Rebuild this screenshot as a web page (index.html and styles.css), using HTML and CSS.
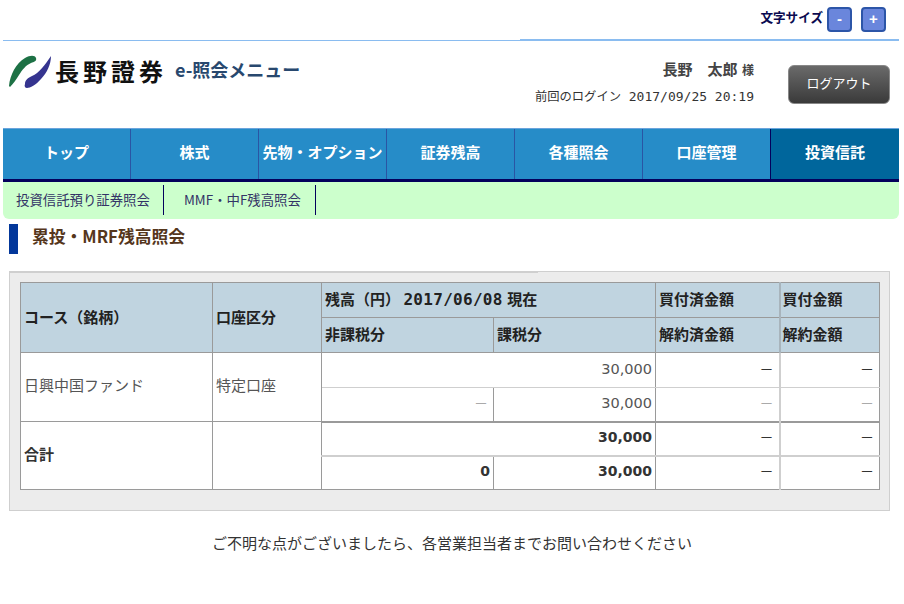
FILE: index.html
```html
<!DOCTYPE html>
<html lang="ja">
<head>
<meta charset="utf-8">
<title>e-照会メニュー</title>
<link rel="stylesheet" href="styles.css">
</head>
<body>
<div class="page">
  <div class="sizebar">
    <span class="size-label">文字サイズ</span>
    <span class="size-btn minus">-</span>
    <span class="size-btn">+</span>
  </div>
  <header class="header">
    <div class="brand">
      <svg class="logo" width="42" height="33" viewBox="0 0 42 33" aria-hidden="true">
        <path d="M0 31C1 20 7 8 16 3C21 0 26 0 27 3C28 6 25 7 22 8C17 10 13 15 10 20C7 25 4 29 1 32Z" fill="#1d7145"/>
        <path d="M16 29C16 25 19 23 23 21C30 18 36 10 42 1C42 9 38 18 32 24C27 30 21 33 18 33C16 33 15 31 16 29Z" fill="#35348f"/>
      </svg>
      <span class="company">長野證券</span>
      <span class="service">e-照会メニュー</span>
    </div>
    <div class="user">
      <div class="user-name">長野　太郎 <small>様</small></div>
      <div class="last-login">前回のログイン <span class="mono">2017/09/25 20:19</span></div>
    </div>
    <div class="logout">ログアウト</div>
  </header>
  <nav class="nav">
    <a class="tab">トップ</a>
    <a class="tab">株式</a>
    <a class="tab tight">先物・オプション</a>
    <a class="tab">証券残高</a>
    <a class="tab">各種照会</a>
    <a class="tab">口座管理</a>
    <a class="tab active">投資信託</a>
  </nav>
  <div class="subnav">
    <a class="sub first">投資信託預り証券照会</a>
    <a class="sub second">MMF・中F残高照会</a>
  </div>
  <h1 class="title">累投・MRF残高照会</h1>
  <section class="panel">
    <table class="grid">
      <colgroup>
        <col class="c1"><col class="c2"><col class="c3"><col class="c4"><col class="c5"><col class="c6">
      </colgroup>
      <thead>
        <tr>
          <th rowspan="2">コース（銘柄）</th>
          <th rowspan="2">口座区分</th>
          <th colspan="2">残高（円） <span class="date">2017/06/08</span> 現在</th>
          <th class="soft">買付済金額</th>
          <th class="soft wide">買付金額</th>
        </tr>
        <tr>
          <th>非課税分</th>
          <th>課税分</th>
          <th class="soft">解約済金額</th>
          <th class="soft wide">解約金額</th>
        </tr>
      </thead>
      <tbody>
        <tr>
          <td rowspan="2" class="name">日興中国ファンド</td>
          <td rowspan="2" class="name">特定口座</td>
          <td colspan="2" class="num line">30,000</td>
          <td class="num line dash">－</td>
          <td class="num line dash wide">－</td>
        </tr>
        <tr class="short">
          <td class="num pale">－</td>
          <td class="num">30,000</td>
          <td class="num pale">－</td>
          <td class="num pale wide">－</td>
        </tr>
        <tr class="total">
          <td rowspan="2" class="label">合計</td>
          <td rowspan="2"></td>
          <td colspan="2" class="num line">30,000</td>
          <td class="num line dash">－</td>
          <td class="num line dash wide">－</td>
        </tr>
        <tr class="total">
          <td class="num">0</td>
          <td class="num">30,000</td>
          <td class="num dash">－</td>
          <td class="num dash wide">－</td>
        </tr>
      </tbody>
    </table>
  </section>
  <p class="note">ご不明な点がございましたら、各営業担当者までお問い合わせください</p>
</div>
</body>
</html>
```
FILE: styles.css
```css
* { box-sizing: border-box; }
html, body { margin: 0; padding: 0; background: #fff; }
body {
  font-family: "Noto Sans CJK JP", "Noto Sans", sans-serif;
  font-size: 15px;
  color: #333;
  overflow: hidden;
}
.page { width: 904px; height: 604px; padding: 0 5px 0 3px; }

.sizebar {
  position: relative;
  height: 41px;
  padding: 7px 13px 0 0;
  display: flex;
  justify-content: flex-end;
  align-items: flex-start;
  gap: 9px;
  border-bottom: 1px solid #8abcf0;
}
.sizebar::after {
  content: "";
  position: absolute;
  left: 517px;
  right: 0;
  bottom: 0;
  height: 1px;
  background: #8abcf0;
}
.size-label { font-size: 12.6px; font-weight: 700; line-height: 20px; color: #0a0a50; margin-right: -5px; }
.size-btn {
  width: 25px;
  height: 25px;
  background: #6a86dc;
  border: 2px solid #2c55a8;
  border-radius: 4px;
  color: #fff;
  font: 700 15px/19px "Liberation Sans", sans-serif;
  text-align: center;
}

.header { height: 87px; display: flex; align-items: flex-start; }
.brand { display: flex; align-items: center; padding: 13px 0 0 6px; width: 520px; }
.logo { flex: none; margin-right: 4px; }
.company { font-size: 24px; font-weight: 700; line-height: 34px; letter-spacing: 4px; color: #111; width: 120px; white-space: nowrap; }
.service { font-size: 18px; font-weight: 700; line-height: 24px; color: #28486e; margin: 0 0 4px 0; white-space: nowrap; }
.user { width: 231px; text-align: right; padding-top: 18px; }
.user-name { font-size: 15px; font-weight: 700; line-height: 20px; color: #444; }
.user-name small { font-size: 12px; margin-left: 1px; }
.last-login { font-size: 12.3px; line-height: 18px; color: #333; margin-top: 7px; white-space: nowrap; }
.mono { font-family: "DejaVu Sans Mono", monospace; font-size: 13px; margin-left: 5px; }
.logout {
  width: 102px;
  height: 39px;
  margin: 24px 0 0 34px;
  border: 1px solid #888;
  border-radius: 6px;
  background: linear-gradient(#6a6a6a, #3a3a3a);
  color: #fff;
  font-size: 13px;
  line-height: 34px;
  text-align: center;
}

.nav {
  display: flex;
  height: 54px;
  background: #268cc8;
  border-top: 1px solid #6aa4dc;
  border-bottom: 3px solid #04005c;
}
.tab {
  flex: 0 0 128px;
  height: 50px;
  border-left: 1px solid #2a55a4;
  color: #fff;
  font-size: 15px;
  font-weight: 700;
  line-height: 46px;
  text-align: center;
  white-space: nowrap;
}
.tab:first-child { flex-basis: 127px; border-left: 0; }
.tab.active { flex: 1 1 auto; background: #00669c; border-left-color: #04005c; }

.subnav {
  display: flex;
  height: 37px;
  padding-top: 3px;
  background: #ccffcc;
  border-radius: 0 0 6px 6px;
}
.sub {
  height: 30px;
  border-right: 1px solid #04005c;
  color: #333366;
  font-size: 13.4px;
  line-height: 28px;
  white-space: nowrap;
}
.sub.first { width: 161px; padding-left: 13px; }
.sub.second { width: 152px; padding-left: 20px; }

.title {
  margin: 5px 0 0 6px;
  height: 30px;
  padding-left: 14px;
  border-left: 9px solid #03379a;
  color: #55361c;
  font-size: 16.8px;
  font-weight: 700;
  line-height: 25px;
}

.panel {
  position: relative;
  width: 881px;
  height: 240px;
  margin: 17px 0 0 6px;
  padding: 10px 9px 0 10px;
  background: #ececec;
  border: 1px solid #cfcfcf;
}
.panel::before {
  content: "";
  position: absolute;
  left: 0;
  top: 0;
  width: 528px;
  height: 1px;
  background: #cfcfcf;
}
.grid {
  width: 859px;
  table-layout: fixed;
  border-collapse: collapse;
  background: #fff;
}
.c1 { width: 192px; }
.c2 { width: 109px; }
.c3 { width: 172px; }
.c4 { width: 162px; }
.c5 { width: 124px; }
.c6 { width: 100px; }
.grid th, .grid td {
  height: 35px;
  padding: 0 3px 2px;
  border: 1px solid #9a9a9a;
  font-size: 15px;
  line-height: 20px;
  white-space: nowrap;
}
.grid th { background: #c0d4e0; color: #222; font-weight: 700; text-align: left; }
.grid th.soft { border-left-color: #a8b4bc; }
.grid th.wide { border-left-width: 2px; padding-left: 2px; }
.date { font-family: "DejaVu Sans Mono", monospace; font-size: 16px; letter-spacing: 0.3px; margin: 0 1px 0 0; }
.grid .short td { height: 34px; }
.grid td.name { color: #555; padding-bottom: 4px; }
.grid td.label { color: #333; font-weight: 700; padding-bottom: 4px; }
.grid td.num { text-align: right; color: #555; font-family: "DejaVu Sans", "Noto Sans CJK JP", sans-serif; font-size: 14.5px; padding-bottom: 3px; }
.grid td.line { border-bottom-color: #cfcfcf; }
.grid td.dash { padding-right: 5px; color: #333; font-size: 14px; }
.grid td.pale { padding-right: 5px; color: #aaa; font-size: 14px; }
.grid td.num:nth-last-child(-n+2) { border-left-color: #cfcfcf; border-right-color: #9a9a9a; }
.grid td.wide { border-left-width: 2px; padding-right: 5px; }
.grid .total td { height: 34px; font-weight: 700; border-top-color: #9a9a9a; }
.grid .total td.num { color: #333; font-size: 14px; }
.grid .total td.line { border-top-width: 2px; border-bottom-width: 2px; }
.grid .total td.dash { font-weight: 400; font-size: 14px; }

.note {
  margin: 22px 0 0;
  text-align: center;
  font-size: 15px;
  line-height: 20px;
  color: #333;
  padding-left: 2px;
}
```
